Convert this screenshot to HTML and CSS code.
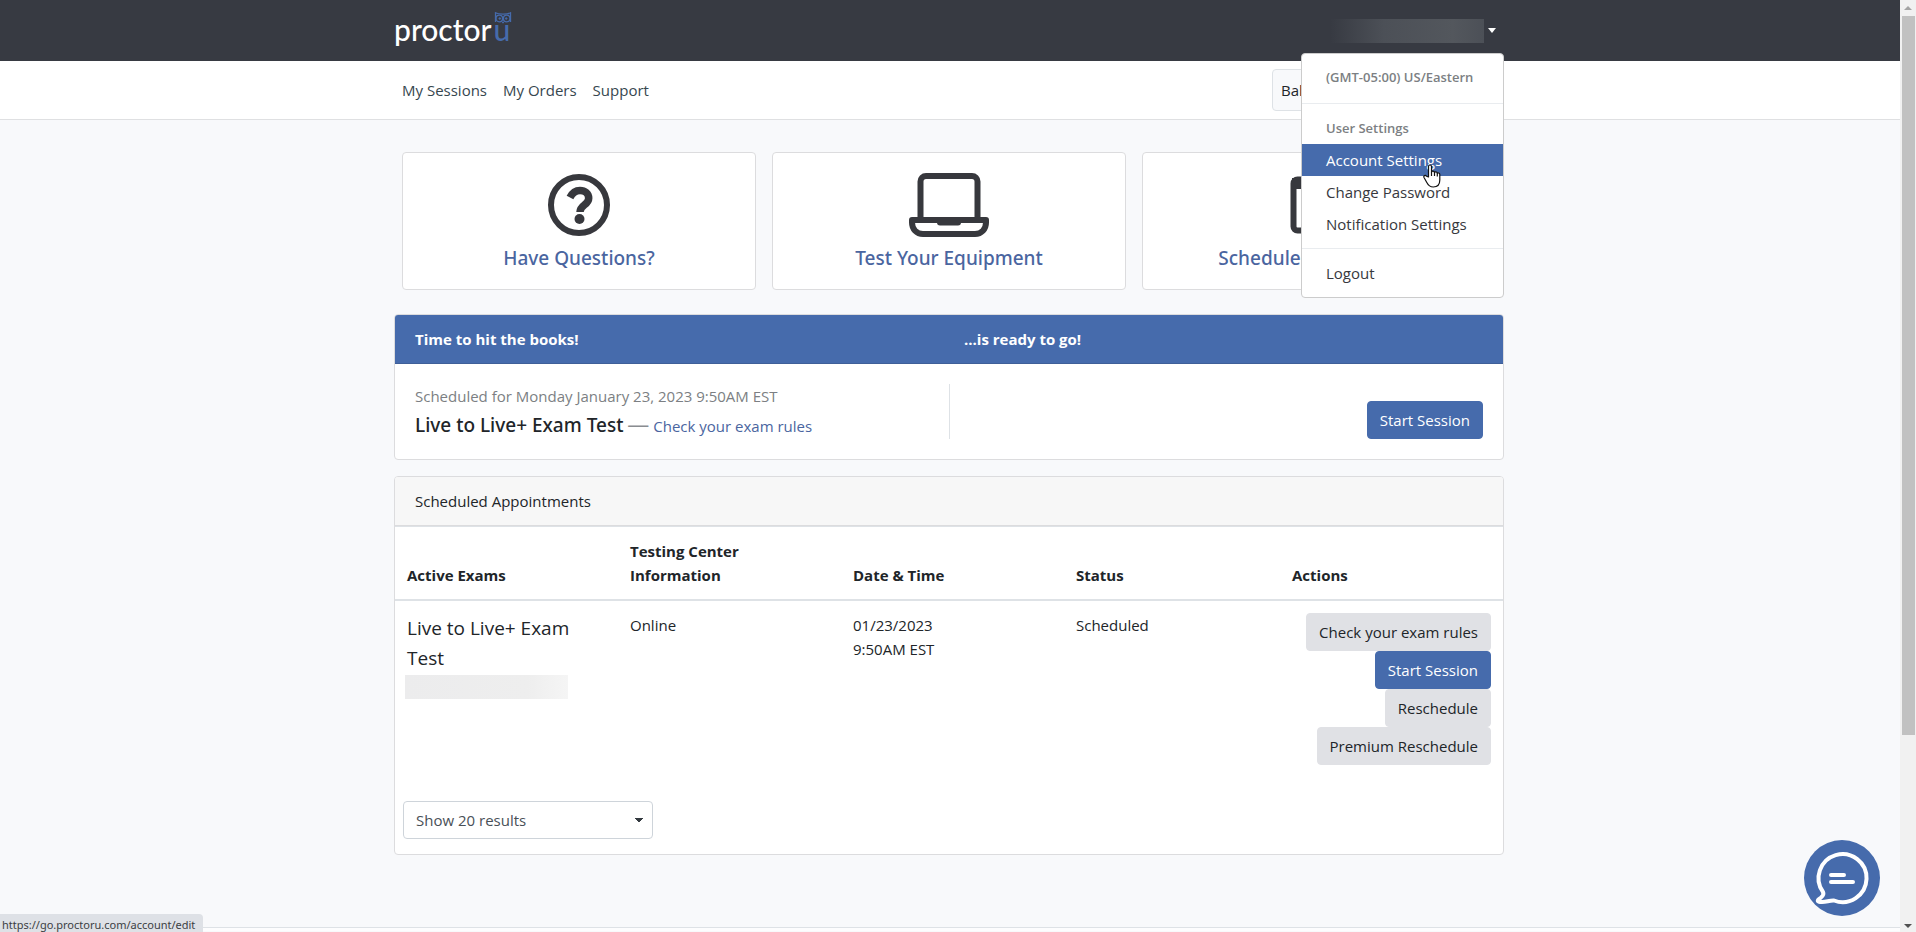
FILE: index.html
```html
<!DOCTYPE html>
<html lang="en">
<head>
    <meta charset="UTF-8">
    <meta name="viewport" content="width=device-width, initial-scale=1.0">
    <title>ProctorU - My Sessions</title>
    <link rel="stylesheet" href="styles.css">
</head>
<body>
    <header class="topbar">
        <div class="container topbar-inner">
            <a href="#" class="logo">proctor<span class="logo-u">u<svg class="owl" viewBox="0 0 18 12" width="18" height="12" fill="none" stroke="#466bac"><path d="M1.5 10V.8C3.5 2 6 2.2 9 2.2S14.500 2 16.500.8V10" stroke-width="1.300"/><circle cx="5.300" cy="6.500" r="3.300" stroke-width="1.300"/><circle cx="12.700" cy="6.500" r="3.300" stroke-width="1.300"/><circle cx="5.800" cy="6.500" r=".8" fill="#466bac"/><circle cx="12.200" cy="6.500" r=".8" fill="#466bac"/><path d="M8 9.500L9 11.200 10 9.500" stroke-width="1"/></svg></span></a>
            <div class="user-menu">
                <button type="button" class="user-toggle" aria-label="Account menu">
                    <span class="user-name"></span>
                    <span class="caret"></span>
                </button>
                <div class="dropdown">
                    <div class="dropdown-header timezone">(GMT-05:00) US/Eastern</div>
                    <hr>
                    <div class="dropdown-header">User Settings</div>
                    <a href="#" class="dropdown-item active">Account Settings</a>
                    <a href="#" class="dropdown-item">Change Password</a>
                    <a href="#" class="dropdown-item">Notification Settings</a>
                    <hr>
                    <a href="#" class="dropdown-item">Logout</a>
                    <svg class="pointer" viewBox="0 0 18 24" width="18" height="24"><path d="M5.500 13V2.500C5.500.5 8.500.5 8.500 2.500V8c.3-1.300 2.800-1.200 3 .6.5-1.200 2.700-.9 2.800.8.6-1 2.500-.6 2.500 1.200V16c0 4.500-2.500 7-6.500 7-3.500 0-5-1.500-6.500-4.500L1 13.500c-.8-1.700 1.200-2.800 2.500-1.300z" fill="#fff" stroke="#111" stroke-width="1.200" stroke-linejoin="round"/><path d="M8.500 8v4M11.500 8.600V12M14.300 9.400V12.500" stroke="#111" stroke-width="1.200"/></svg>
                </div>
            </div>
        </div>
    </header>

    <nav class="navbar">
        <div class="container navbar-inner">
            <div class="nav-links">
                <a href="#">My Sessions</a>
                <a href="#">My Orders</a>
                <a href="#">Support</a>
            </div>
            <div class="balance">Bal</div>
        </div>
    </nav>

    <main class="container">
        <div class="tiles">
            <a href="#" class="tile">
                <svg viewBox="0 0 80 64" width="80" height="64">
                    <circle cx="40" cy="32" r="28" fill="none" stroke="#37383d" stroke-width="6"/>
                    <path d="M31 24.500C34 18.500 38 17.500 41 17.500c5 0 8.700 3 8.700 7.700 0 6.800-8.700 6.600-8.700 13.800" fill="none" stroke="#37383d" stroke-width="7.500"/>
                    <circle cx="40.500" cy="46" r="5" fill="#37383d"/>
                </svg>
                <span>Have Questions?</span>
            </a>
            <a href="#" class="tile">
                <svg viewBox="0 0 80 64" width="80" height="64">
                    <path d="M11.500 46V8.500a5.500 5.500 0 0 1 5.500-5.500h46a5.500 5.500 0 0 1 5.500 5.500V46" fill="none" stroke="#37383d" stroke-width="6"/>
                    <path d="M3 47h74v2.500C77 56 72.500 61 66 61H14C7.500 61 3 56 3 49.500z" fill="none" stroke="#37383d" stroke-width="6" stroke-linejoin="round"/>
                    <path d="M28 46h24v3.500a3 3 0 0 1-3 3H31a3 3 0 0 1-3-3z" fill="#37383d"/>
                </svg>
                <span>Test Your Equipment</span>
            </a>
            <a href="#" class="tile">
                <svg viewBox="0 0 80 64" width="80" height="64">
                    <rect x="14.500" y="6.500" width="51" height="51" rx="4" fill="none" stroke="#37383d" stroke-width="6"/>
                    <path d="M13 5h54v11H13zM44 37h12v12H44z" fill="#37383d"/>
                </svg>
                <span>Schedule New Session</span>
            </a>
        </div>

        <section class="card">
            <div class="card-header primary split">
                <div>Time to hit the books!</div>
                <div>...is ready to go!</div>
            </div>
            <div class="card-body split">
                <div>
                    <div class="muted">Scheduled for Monday January 23, 2023 9:50AM EST</div>
                    <div class="exam-line"><strong>Live to Live+ Exam Test</strong> <span class="dash">—</span> <a href="#">Check your exam rules</a></div>
                </div>
                <div class="start">
                    <button type="button" class="btn btn-primary">Start Session</button>
                </div>
            </div>
        </section>

        <section class="card">
            <div class="card-header">Scheduled Appointments</div>
            <table class="exams">
                <thead>
                    <tr>
                        <th>Active Exams</th>
                        <th>Testing Center Information</th>
                        <th>Date &amp; Time</th>
                        <th>Status</th>
                        <th>Actions</th>
                    </tr>
                </thead>
                <tbody>
                    <tr>
                        <td>
                            <div class="exam-name">Live to Live+ Exam Test</div>
                            <div class="redacted"></div>
                        </td>
                        <td>Online</td>
                        <td>01/23/2023<br>9:50AM EST</td>
                        <td>Scheduled</td>
                        <td>
                            <div class="actions">
                                <button type="button" class="btn">Check your exam rules</button>
                                <button type="button" class="btn btn-primary">Start Session</button>
                                <button type="button" class="btn">Reschedule</button>
                                <button type="button" class="btn">Premium Reschedule</button>
                            </div>
                        </td>
                    </tr>
                </tbody>
            </table>
            <div class="results">
                <select aria-label="Results per page">
                    <option>Show 20 results</option>
                </select>
            </div>
        </section>
    </main>

    <footer class="footer"></footer>

    <button type="button" class="chat" aria-label="Chat">
        <svg viewBox="0 0 76 76" width="76" height="76" fill="none" stroke="#fff" stroke-linecap="round" stroke-linejoin="round">
            <path d="M19 52A24 24 0 1 1 30 60.500C25 60 20 63.500 14.500 61.500 12.500 60.500 15 59 17 57.500 19.500 55.500 20 54 19 52z" stroke-width="4"/>
            <path d="M27 35h13M27 42h22" stroke-width="4"/>
        </svg>
    </button>

    <div class="status-url">https://go.proctoru.com/account/edit</div>

    <div class="scrollbar">
        <span class="arrow-up"></span>
        <span class="thumb"></span>
        <span class="arrow-down"></span>
    </div>
</body>
</html>
```

FILE: styles.css
```css
/* Global Styles */
* {
    box-sizing: border-box;
}

body {
    font-family: 'Open Sans', 'Noto Sans', sans-serif;
    font-size: 15px;
    line-height: 24px;
    margin: 0;
    padding-right: 16px;
    background: #f8f9fb;
    color: #212529;
}

a {
    color: #4a65a0;
    text-decoration: none;
}

button,
select {
    font: inherit;
    cursor: pointer;
}

.container {
    max-width: 1140px;
    margin: 0 auto;
    padding: 0 16px 0 14px;
}

/* Top bar */
.topbar {
    background: #373a42;
}

.topbar-inner {
    display: flex;
    justify-content: space-between;
    align-items: center;
    height: 61px;
}

.logo {
    padding-bottom: 4px;
    font-family: Lato, sans-serif;
    font-size: 30px;
    font-weight: 500;
    line-height: 40px;
    color: #fff;
}

.logo-u {
    position: relative;
    margin-left: 2px;
    color: #466bac;
}

.owl {
    position: absolute;
    left: 0;
    top: 1px;
}

.user-menu {
    position: relative;
}

.user-toggle {
    display: flex;
    align-items: center;
    gap: 4px;
    padding: 0 8px;
    border: none;
    background: none;
}

.user-name {
    width: 154px;
    height: 24px;
    background: linear-gradient(to right, #373a42, #4c5057 35%, #53575d 80%, #4c5057);
}

.caret {
    border: 4px solid transparent;
    border-top: 5px solid #fff;
    border-bottom: 0;
}

.dropdown {
    position: absolute;
    top: 34px;
    right: 0;
    width: 203px;
    padding: 8px 0;
    background: #fff;
    border: 1px solid #ccc;
    border-radius: 4px;
    z-index: 10;
}

.dropdown hr {
    margin: 8px 0;
    border: none;
    border-top: 1px solid #e9ecef;
}

.dropdown-header,
.dropdown-item {
    display: block;
    padding: 4px 24px;
    white-space: nowrap;
}

.dropdown-header {
    font-size: 13px;
    font-weight: 600;
    color: #7c7f83;
}

.dropdown-header.timezone {
    padding: 3px 24px 6px;
}

.dropdown-item {
    color: #37383d;
}

.dropdown-item.active {
    background: #466bac;
    color: #fff;
}

.pointer {
    position: absolute;
    left: 121px;
    top: 110px;
}

/* Navigation */
.navbar {
    background: #fff;
    border-bottom: 1px solid #dfe0e2;
}

.navbar-inner {
    display: flex;
    justify-content: space-between;
    align-items: center;
    height: 58px;
}

.nav-links {
    display: flex;
    gap: 16px;
    padding-left: 8px;
}

.nav-links a {
    color: #37474f;
}

.balance {
    width: 224px;
    margin-right: 8px;
    padding: 8px;
    background: #f8f9fb;
    border: 1px solid #dee2e6;
    border-radius: 4px;
}

/* Tiles */
.tiles {
    display: grid;
    grid-template-columns: repeat(3, 1fr);
    gap: 16px;
    padding: 32px 8px 24px;
}

.tile {
    display: flex;
    flex-direction: column;
    align-items: center;
    gap: 7px;
    padding: 20px 0 17px;
    background: #fff;
    border: 1px solid #dcdcde;
    border-radius: 4px;
    font-family: 'Noto Sans', 'Open Sans', sans-serif;
    font-size: 19px;
    font-weight: 500;
    line-height: 28px;
}

/* Cards */
.card {
    margin-bottom: 16px;
    background: #fff;
    border: 1px solid #dcdcde;
    border-radius: 4px;
    overflow: hidden;
}

.card-header {
    padding: 12px 20px;
    background: #f7f7f7;
    border-bottom: 1px solid #dcdcde;
}

.card-header.primary {
    background: #466bac;
    border-bottom-color: #3f5f98;
    color: #fff;
    font-weight: bold;
}

.card-body {
    padding: 20px;
}

.split {
    display: grid;
    grid-template-columns: 1fr 1fr;
}

.split > div + div {
    padding-left: 15px;
}

.muted {
    color: #7c7f83;
}

.exam-line {
    margin-top: 2px;
    line-height: 26px;
}

.exam-line strong {
    font-family: 'Noto Sans', 'Open Sans', sans-serif;
    font-size: 19px;
    font-weight: 500;
}

.dash {
    font-size: 22px;
    color: #8a8d91;
}

.start {
    display: flex;
    justify-content: flex-end;
    align-items: flex-end;
    border-left: 1px solid #dee2e6;
}

.btn {
    height: 38px;
    padding: 0 12px;
    border: 1px solid #e0e1e5;
    border-radius: 4px;
    background: #e0e1e5;
    color: #212529;
    white-space: nowrap;
}

.btn-primary {
    background: #466bac;
    border-color: #466bac;
    color: #fff;
}

/* Exams table */
.exams {
    width: 100%;
    table-layout: fixed;
    border-collapse: separate;
    border-spacing: 0;
}

.exams th,
.exams td {
    padding: 12px;
    text-align: left;
    vertical-align: top;
}

.exams th {
    width: 223px;
    vertical-align: bottom;
    border-top: 1px solid #dee2e6;
    border-bottom: 2px solid #dee2e6;
}

.exams th:nth-child(2) {
    padding-right: 60px;
}

.exams th:nth-child(4) {
    width: auto;
}

.exam-name {
    font-size: 19px;
    line-height: 30px;
}

.redacted {
    width: 163px;
    height: 24px;
    margin: 2px 0 0 -2px;
    background: linear-gradient(to right, #ececed, #eeeeee 75%, #f5f5f5);
}

.actions {
    display: flex;
    flex-direction: column;
    align-items: flex-end;
}

.results {
    padding: 24px 8px 15px;
}

.results select {
    width: 250px;
    height: 38px;
    padding: 0 12px;
    appearance: none;
    border: 1px solid #ced4da;
    border-radius: 4px;
    color: #495057;
    background: linear-gradient(to bottom right, #343a40 50%, transparent 50%) no-repeat right 9px center / 4px 5px,
        linear-gradient(to bottom left, #343a40 50%, transparent 50%) no-repeat right 13px center / 4px 5px;
}

/* Footer */
.footer {
    height: 4px;
    margin-top: 72px;
    background: #fdfdfe;
    border-top: 1px solid #dee2e6;
}

/* Chat */
.chat {
    position: fixed;
    right: 36px;
    bottom: 16px;
    width: 76px;
    height: 76px;
    padding: 0;
    border: none;
    border-radius: 50%;
    background: #466bac;
}

/* Link target shown in the corner */
.status-url {
    position: fixed;
    left: 0;
    bottom: 0;
    padding: 4px 8px 0 2px;
    background: #dee1e6;
    border-top-right-radius: 4px;
    font-family: 'Noto Sans', 'Open Sans', sans-serif;
    font-size: 11px;
    line-height: 14px;
    color: #3c4043;
}

/* Scrollbar */
.scrollbar {
    position: fixed;
    top: 0;
    right: 0;
    bottom: 0;
    display: flex;
    flex-direction: column;
    align-items: center;
    justify-content: space-between;
    width: 16px;
    padding: 6px 0 4px;
    background: #f1f1f1;
}

.thumb {
    width: 13px;
    flex: 0 0 78%;
    margin: 6px 0 auto;
    background: #c1c1c1;
}

.arrow-up,
.arrow-down {
    border: 4px solid transparent;
}

.arrow-up {
    border-top: 0;
    border-bottom-color: #a3a3a3;
}

.arrow-down {
    border-bottom: 0;
    border-top-color: #505050;
}
```
